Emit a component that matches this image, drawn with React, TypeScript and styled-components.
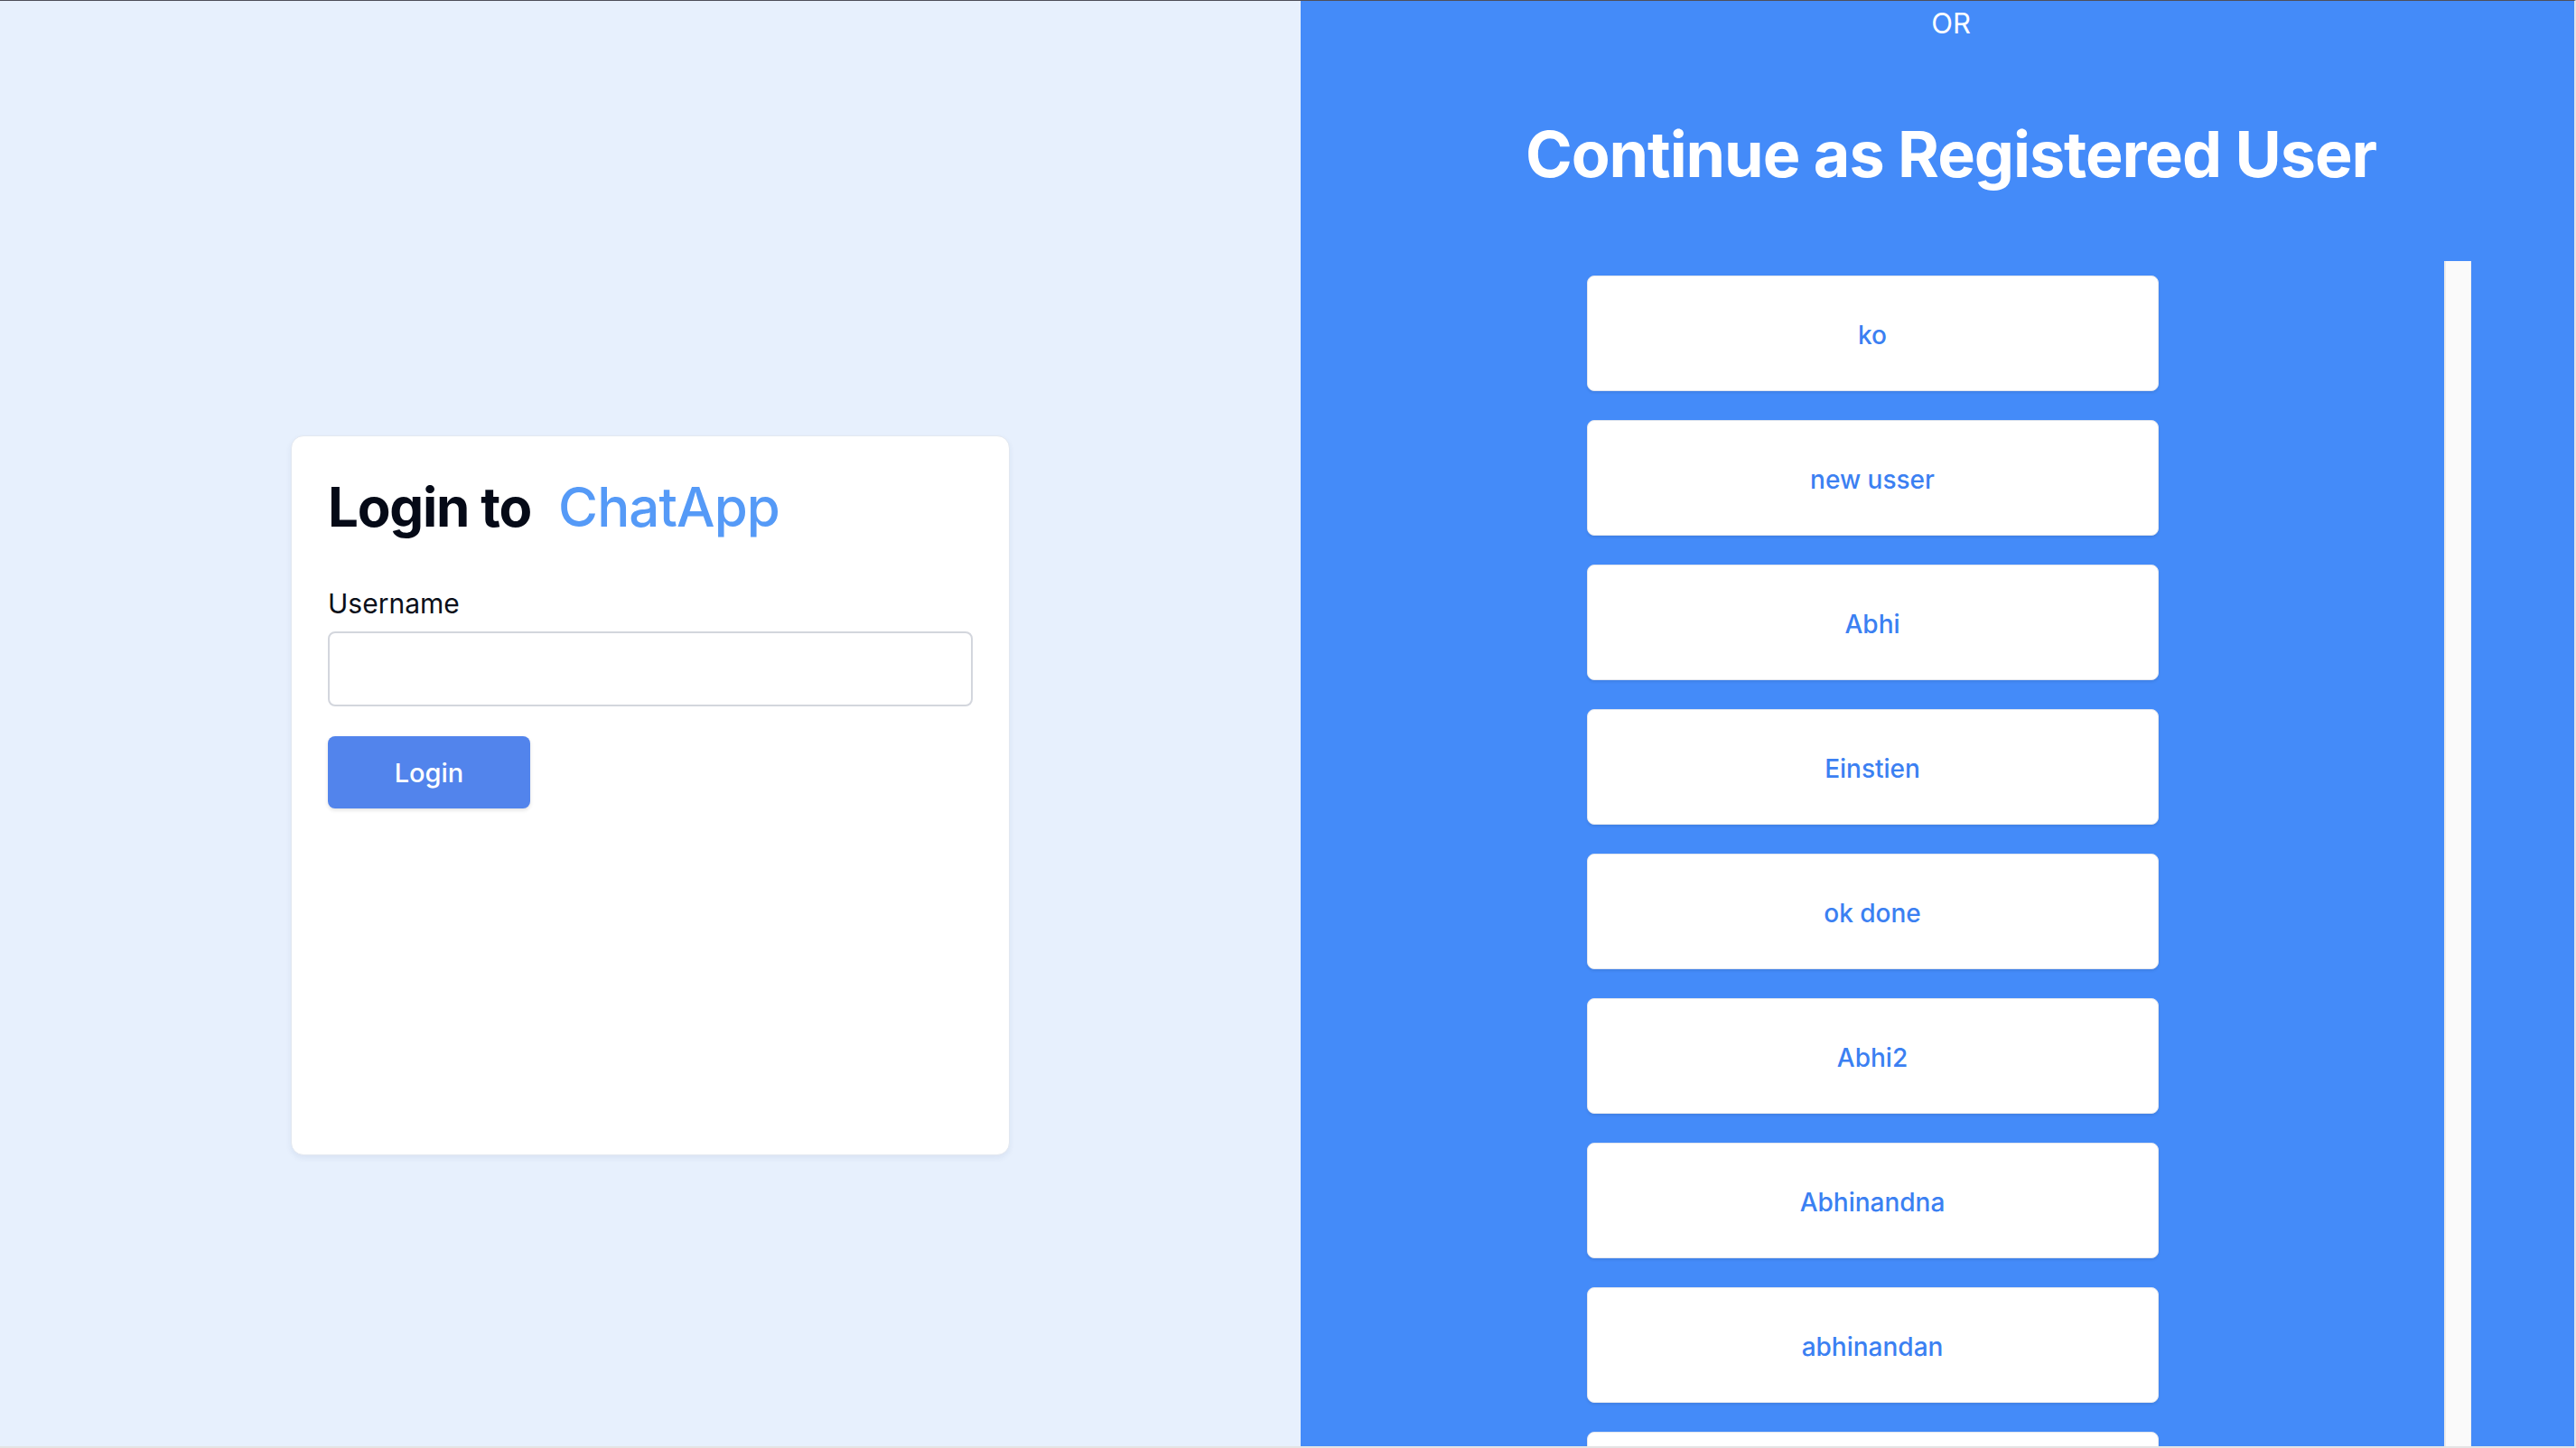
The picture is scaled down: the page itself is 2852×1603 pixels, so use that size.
import React from "react";
import styled, { createGlobalStyle } from "styled-components";

const GlobalStyle = createGlobalStyle`
  html, body {
    margin: 0;
    padding: 0;
    overflow: hidden;
  }
  body {
    font-family: Inter, "Noto Sans", "Liberation Sans", sans-serif;
    -webkit-font-smoothing: antialiased;
  }
  * { box-sizing: border-box; }
`;

const Frame = styled.div`
  display: flex;
  height: 100vh;
  width: 100vw;
  overflow: hidden;
  border-top: 1px solid #4f4f5a;
  border-right: 2px solid #e4e4e4;
  border-bottom: 2px solid #e4e4e4;
`;

const LeftPanel = styled.section`
  flex: 0 0 1440px;
  background: #e7f0fd;
  display: flex;
  flex-direction: column;
  align-items: center;
  padding-top: 481px;
`;

const Card = styled.div`
  width: 796px;
  height: 797px;
  background: #ffffff;
  border: 1px solid #e3e8f0;
  border-radius: 14px;
  box-shadow: 0 3px 6px rgba(30, 60, 120, 0.07);
  padding: 42px 40px;
  display: flex;
  flex-direction: column;
  align-items: flex-start;
`;

const Title = styled.h1`
  margin: 0;
  font-size: 60px;
  line-height: 72px;
  font-weight: 700;
  color: #050a17;
  letter-spacing: -0.02em;
`;

const Brand = styled.span`
  margin-left: 30px;
  font-weight: 500;
  color: #559af7;
  letter-spacing: -0.015em;
`;

const Label = styled.label`
  margin-top: 50px;
  font-size: 30px;
  line-height: 43px;
  color: #0b0f19;
`;

const Input = styled.input`
  margin-top: 9px;
  width: 100%;
  height: 83px;
  border: 2px solid #d3d6dd;
  border-radius: 8px;
  background: #fff;
  font-family: inherit;
  font-size: 29px;
  padding: 0 20px;
  outline: none;
`;

const LoginButton = styled.button`
  margin-top: 33px;
  width: 224px;
  height: 80px;
  border: none;
  border-radius: 8px;
  background: #5284ec;
  color: #ffffff;
  font-family: inherit;
  font-size: 29px;
  font-weight: 500;
  box-shadow: 0 2px 4px rgba(0, 0, 0, 0.12);
  cursor: pointer;
`;

const RightPanel = styled.section`
  flex: 0 0 1440px;
  background: #448bf9;
  display: flex;
  flex-direction: column;
  align-items: center;
  padding-top: 7px;
  min-height: 0;
`;

const OrText = styled.div`
  font-size: 31px;
  line-height: 36px;
  color: #ffffff;
`;

const Heading = styled.h2`
  margin: 85px 0 0;
  font-size: 70px;
  line-height: 84px;
  font-weight: 700;
  color: #ffffff;
  letter-spacing: -0.015em;
`;

const UserArea = styled.div`
  align-self: flex-start;
  width: 90%;
  flex: 1;
  min-height: 0;
  margin-top: 76px;
  display: flex;
`;

const UserList = styled.div`
  flex: 1;
  min-width: 0;
  padding-top: 16px;
  display: flex;
  flex-direction: column;
  align-items: center;
  gap: 32px;
  overflow: hidden;
`;

const ScrollTrack = styled.div`
  flex: 0 0 30px;
  background: #fafafa;
  border-left: 2px solid #ebebeb;
  border-right: 1px solid #f1f1f1;
`;

const UserItem = styled.button`
  flex: 0 0 128px;
  width: 50%;
  padding: 3px 0 0;
  background: #ffffff;
  border: 1px solid #e2e6ee;
  border-radius: 8px;
  box-shadow: 0 2px 3px rgba(0, 0, 0, 0.08);
  font-family: inherit;
  font-size: 28px;
  font-weight: 500;
  color: #3b80f2;
  cursor: pointer;
`;

const users = [
  "ko",
  "new usser",
  "Abhi",
  "Einstien",
  "ok done",
  "Abhi2",
  "Abhinandna",
  "abhinandan",
];

export default function App() {
  return (
    <>
      <GlobalStyle />
      <Frame>
        <LeftPanel>
          <Card>
            <Title>
              Login to<Brand>ChatApp</Brand>
            </Title>
            <Label htmlFor="username">Username</Label>
            <Input id="username" type="text" />
            <LoginButton>Login</LoginButton>
          </Card>
        </LeftPanel>
        <RightPanel>
          <OrText>OR</OrText>
          <Heading>Continue as Registered User</Heading>
          <UserArea>
            <UserList>
              {users.map((u) => (
                <UserItem key={u}>{u}</UserItem>
              ))}
              <UserItem aria-label="more users" />
            </UserList>
            <ScrollTrack />
          </UserArea>
        </RightPanel>
      </Frame>
    </>
  );
}
